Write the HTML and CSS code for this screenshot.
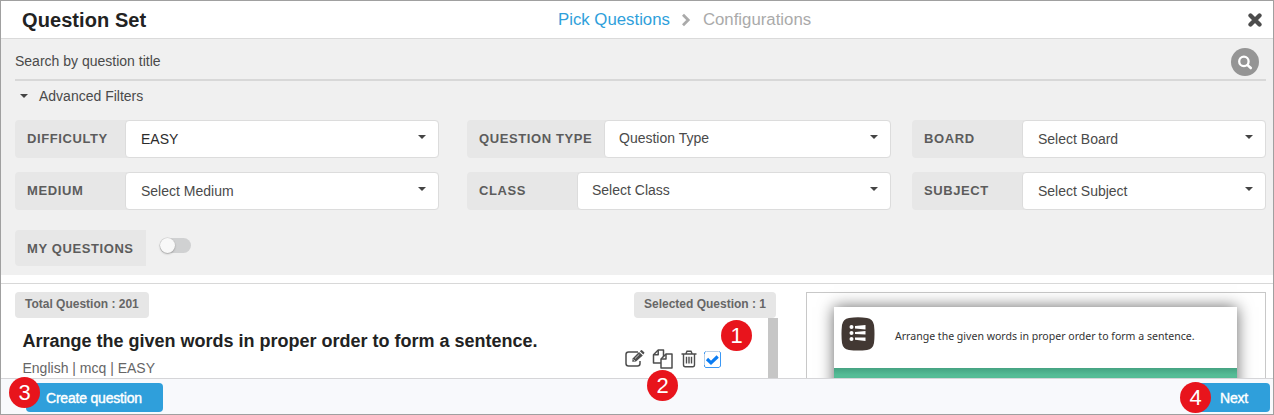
FILE: index.html
```html
<!DOCTYPE html>
<html lang="en">
<head>
<meta charset="utf-8">
<title>Question Set</title>
<link rel="stylesheet" href="styles.css">
</head>
<body>
<div class="window">
  <header class="header">
    <h1 class="title">Question Set</h1>
    <nav class="steps">
      <span class="step active">Pick Questions</span>
      <svg class="chevron" width="10" height="14" viewBox="0 0 10 14"><path d="M2 1.8 7.2 7 2 12.2" fill="none" stroke="#aaa" stroke-width="2.8"/></svg>
      <span class="step">Configurations</span>
    </nav>
    <svg class="close" width="14" height="14" viewBox="0 0 14 14"><path d="M2.5 2.5 11.5 11.5M11.5 2.5 2.5 11.5" stroke="#4c4c4c" stroke-width="4.3" stroke-linecap="round"/></svg>
  </header>

  <section class="filters">
    <div class="search">
      <span>Search by question title</span>
      <span class="search-btn"><svg width="28" height="28" viewBox="0 0 28 28"><circle cx="12.9" cy="13.4" r="4.7" fill="none" stroke="#fff" stroke-width="2.3"/><path d="M16.6 17.1 19.8 20" stroke="#fff" stroke-width="2.6" stroke-linecap="round"/></svg></span>
    </div>
    <div class="advanced"><i class="caret"></i>Advanced Filters</div>
    <div class="grid">
      <div class="field"><label class="label">DIFFICULTY</label><div class="select dark">EASY<i class="caret"></i></div></div>
      <div class="field middle"><label class="label wide">QUESTION TYPE</label><div class="select">Question Type<i class="caret"></i></div></div>
      <div class="field"><label class="label">BOARD</label><div class="select">Select Board<i class="caret"></i></div></div>
      <div class="field"><label class="label">MEDIUM</label><div class="select">Select Medium<i class="caret"></i></div></div>
      <div class="field middle"><label class="label">CLASS</label><div class="select">Select Class<i class="caret"></i></div></div>
      <div class="field"><label class="label">SUBJECT</label><div class="select">Select Subject<i class="caret"></i></div></div>
    </div>
    <div class="mine"><span class="label mine-label">MY QUESTIONS</span><span class="toggle"><i class="knob"></i></span></div>
  </section>

  <main class="content">
    <section class="list">
      <div class="counts"><span class="pill">Total Question : 201</span><span class="pill">Selected Question : 1</span></div>
      <div class="list-body">
        <div class="question">
          <h2 class="question-title">Arrange the given words in proper order to form a sentence.</h2>
          <p class="meta">English | mcq | EASY</p>
        </div>
        <div class="actions">
          <svg width="20" height="18" viewBox="0 0 20 18" fill="none" stroke="#4d4d4d"><path d="M13 2H3.500Q1 2 1 4.500V13.500Q1 16 3.500 16H12.500Q15 16 15 13.500V11" stroke-width="1.5"/><path d="M7.200 11.800 7.600 8.400 14 2 17.800 5.400 11 11.600Z" fill="#4d4d4d" stroke="none"/><path d="M14.900 1.200 16 .300Q16.700-.1 17.300.400L19.200 2.200Q19.700 2.700 19.200 3.300L18.300 4.400Z" fill="#4d4d4d" stroke="none"/><path d="M10 8.500 14.300 4.300M8.300 9.400 9.900 11" stroke="#fff" stroke-width=".7"/></svg>
          <svg width="22" height="20" viewBox="0 0 22 20" fill="#fff" stroke="#4d4d4d" stroke-width="1.5" stroke-linejoin="round"><path d="M6.200 1H11.500V14H1.500V5.800Z"/><path d="M6.200 1V5.800H1.500" fill="none"/><path d="M14 5H20V19H9V10Z"/><path d="M14 5V10H9" fill="none"/></svg>
          <svg width="16" height="18" viewBox="0 0 16 18" fill="none" stroke="#4d4d4d" stroke-width="1.400"><path d="M.5 4H15.500M4.800 4 6 1.200H10L11.200 4M2.500 4V14.800Q2.500 16.800 4.200 16.800H11.800Q13.500 16.800 13.500 14.800V4M5.500 6.800V13.500M8 6.800V13.500M10.500 6.800V13.500"/></svg>
          <svg width="17" height="17" viewBox="0 0 17 17"><rect x=".5" y=".5" width="16" height="16" rx="2" fill="#fff" stroke="#b9cfe6"/><path d="M.5 3V1.500L1.500.5M15.500.5 16.500 1.500V15L15 16.500H1.500L.5 15.500V14" fill="none" stroke="#3a98f5"/><path d="M3 8 7 11.800 13.700 5.500" fill="none" stroke="#0a7cf2" stroke-width="3.200"/></svg>
        </div>
        <i class="scrollbar"></i>
      </div>
    </section>
    <section class="preview">
      <div class="card">
        <div class="card-head">
          <svg width="34" height="34" viewBox="0 0 34 34"><path d="M8 1Q17-.6 26 1Q32 2 33 8Q34 17 33 26Q32 32 26 33Q17 34 8 33Q2 32 1 26Q0 17 1 8Q2 2 8 1Z" fill="#423833"/><g fill="#fff"><circle cx="10.500" cy="10" r="2"/><circle cx="10.500" cy="16" r="2"/><circle cx="10.500" cy="22" r="2"/><path d="M14 9 24.500 8V12.500L14 11.500ZM14 15 24.500 14V17.500L14 17ZM14 20.500 24.500 20.500V24L14 22.800Z"/></g></svg>
          <span>Arrange the given words in proper order to form a sentence.</span>
        </div>
        <div class="card-body"></div>
      </div>
    </section>
  </main>

  <footer class="footer">
    <span class="button create">Create question</span>
    <span class="button next">Next</span>
  </footer>

  <b class="marker m1">1</b>
  <b class="marker m2">2</b>
  <b class="marker m3">3</b>
  <b class="marker m4">4</b>
</div>
</body>
</html>
```
FILE: styles.css
```css
* { box-sizing: border-box; }
body { margin: 0; font-family: "Liberation Sans", Arial, sans-serif; font-size: 14px; color: #4a4a4a; }
h1, h2, p { margin: 0; }
svg { display: block; flex: none; }
.window { position: relative; width: 1274px; height: 415px; border: 1px solid #a0a0a0; background: #fff; display: flex; flex-direction: column; overflow: hidden; }

.header { height: 38px; flex: none; border-bottom: 1px solid #dadada; display: flex; align-items: center; padding: 0 11px 0 21px; }
.title { width: 536px; font-size: 20px; line-height: 24px; color: #222; letter-spacing: .08px; }
.steps { flex: 1; display: flex; align-items: center; font-size: 16.8px; line-height: 20px; color: #aaa; padding-top: 1px; }
.active { color: #2f9fdb; }
.chevron { margin: 0 12px 0 11px; }

.filters { height: 236px; flex: none; background: #f0f0f0; padding: 0 7px 0 14px; }
.search { height: 42px; border-bottom: 2px solid #d8d8d8; display: flex; justify-content: space-between; align-items: center; padding: 4px 7px 0 0; }
.search-btn { width: 28px; height: 28px; border-radius: 50%; background: #959595; margin-top: 1px; }
.advanced { height: 39px; display: flex; align-items: center; gap: 11px; padding: 0 0 10px 5px; }
.caret { width: 0; height: 0; border: 4px solid transparent; border-top-color: #444; border-bottom: 0; flex: none; }
.grid { display: grid; grid-template-columns: 452px 445px 354px; row-gap: 14px; }
.field { display: flex; height: 38px; width: 424px; background: #e7e7e7; border-radius: 4px; }
.field:nth-child(3n) { width: 354px; }
.label { width: 110px; flex: none; padding: 0 0 2px 12px; display: flex; align-items: center; font-size: 13px; font-weight: bold; letter-spacing: .6px; color: #5c5c5c; white-space: nowrap; }
.wide { width: 137px; }
.select { flex: 1; background: #fff; border: 1px solid #dcdcdc; border-radius: 4px; display: flex; align-items: center; justify-content: space-between; padding: 0 12px 0 15px; }
.middle .select { padding: 0 12px 2px 14px; }
.select .caret { margin-bottom: 4px; }
.middle .caret { margin-bottom: 2px; }
.dark { color: #2b2b2b; }
.mine { display: flex; margin-top: 20px; gap: 14px; }
.mine-label { width: 131px; height: 36px; padding-bottom: 0; background: #e7e7e7; border-radius: 4px 0 0 4px; }
.toggle { width: 31px; height: 15px; margin-top: 8px; border-radius: 8px; background: #d0d1d2; }
.knob { display: block; width: 15px; height: 15px; border-radius: 50%; background: #f8f8f8; box-shadow: 0 1px 2px rgba(0,0,0,.25), 0 0 0 .5px #ccc; }

.content { height: 95px; flex: none; margin-top: 8px; border-top: 1px solid #d8d8d8; display: flex; padding: 8px 7px 0 14px; overflow: hidden; }
.list { width: 763px; margin-right: 28px; }
.counts { display: flex; justify-content: space-between; padding-right: 2px; }
.pill { height: 26px; padding: 0 10px; border-radius: 4px; background: #e6e6e6; color: #666; font-size: 12px; font-weight: bold; line-height: 25px; }
.list-body { height: 60px; display: flex; }
.question { width: 610px; padding: 12px 0 0 7.5px; }
.question-title { font-size: 18px; line-height: 22px; color: #222; white-space: nowrap; }
.meta { margin-top: 8px; line-height: 16px; color: #666; }
.actions { height: 20px; margin-top: 31px; flex: 1; display: flex; align-items: center; gap: 7px; }
.scrollbar { width: 10px; height: 60px; background: #c6c6c6; }
.preview { width: 460px; height: 110px; border: 1px solid #c8c8c8; padding: 14px 28px 0 27px; }
.card { height: 120px; box-shadow: 0 0 15px rgba(0,0,0,.6); }
.card-head { height: 61px; background: #fff; display: flex; align-items: flex-start; gap: 20px; padding: 10px 0 0 7px; font: 10.55px "Noto Sans", sans-serif; color: #333; white-space: nowrap; }
.card-head span { line-height: 16px; margin-top: 11px; }
.card-body { height: 60px; background: linear-gradient(#45a382, #55bc96 7px); }

.footer { height: 36px; flex: none; border-top: 1px solid #d5d5d8; background: #f8f9fc; display: flex; justify-content: space-between; align-items: flex-start; padding: 4px 3px 0 25px; }
.button { height: 29px; border-radius: 4px; background: #2f9fdb; color: #fff; line-height: 30px; letter-spacing: -.2px; -webkit-text-stroke: .4px #fff; white-space: nowrap; }
.create { width: 137px; padding-left: 20px; }
.next { width: 74px; padding-left: 24px; }

/* Callout markers overlay the interface */
.marker { position: absolute; width: 31px; height: 31px; border-radius: 50%; background: #e8141c; color: #fff; font-size: 22px; font-weight: normal; line-height: 31px; text-align: center; }
.m1 { left: 720px; top: 319px; }
.m2 { left: 646px; top: 369px; }
.m3 { left: 8px; top: 376px; }
.m4 { left: 1179px; top: 381px; }
```
